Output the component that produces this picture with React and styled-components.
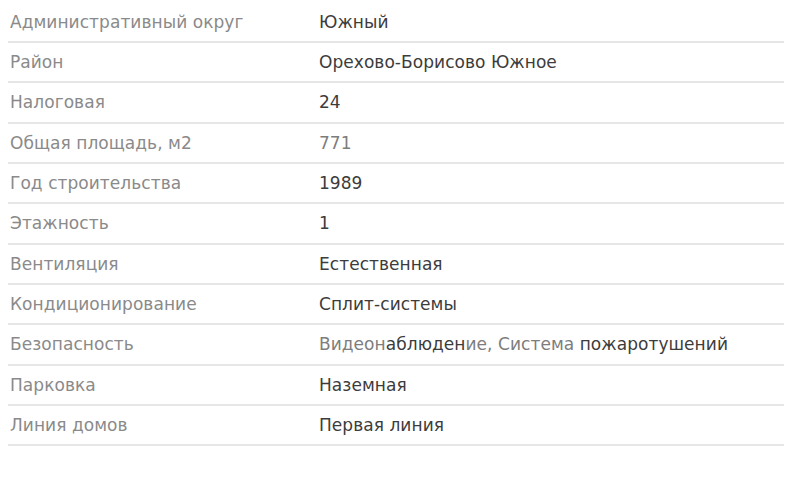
import React from "react";
import styled, { createGlobalStyle } from "styled-components";

const Global = createGlobalStyle`
  html, body { margin: 0; padding: 0; background: #fff; }
  body { font-family: "DejaVu Sans", "Noto Sans", sans-serif; }
`;

const Table = styled.div`
  width: 776px;
  margin: 2.5px 0 0 8px;
  display: flex;
  flex-direction: column;
`;

const Row = styled.div`
  display: grid;
  grid-template-columns: 311px 1fr;
  height: 40.35px;
  box-sizing: border-box;
  border-bottom: 2px solid #e6e6e6;
  align-items: center;
  font-size: 17px;
  letter-spacing: 0.05px;
`;

const Label = styled.div`
  color: #8a8a8a;
  padding-left: 2px;
`;

const Value = styled.div`
  color: ${(p) => (p.$muted ? "#7d7d7d" : "#3c3c3c")};
`;

const Muted = styled.span`
  color: #7d7d7d;
`;

const rows = [
  ["Административный округ", "Южный"],
  ["Район", "Орехово-Борисово Южное"],
  ["Налоговая", "24"],
  ["Общая площадь, м2", "771", true],
  ["Год строительства", "1989"],
  ["Этажность", "1"],
  ["Вентиляция", "Естественная"],
  ["Кондиционирование", "Сплит-системы"],
  [
    "Безопасность",
    <>
      <Muted>Видеон</Muted>аблюден<Muted>ие, Система</Muted> пожаротушений
    </>,
  ],
  ["Парковка", "Наземная"],
  ["Линия домов", "Первая линия"],
];

export default function App() {
  return (
    <>
      <Global />
      <Table>
        {rows.map(([l, v, m], i) => (
          <Row key={i}>
            <Label>{l}</Label>
            <Value $muted={m}>{v}</Value>
          </Row>
        ))}
      </Table>
    </>
  );
}
